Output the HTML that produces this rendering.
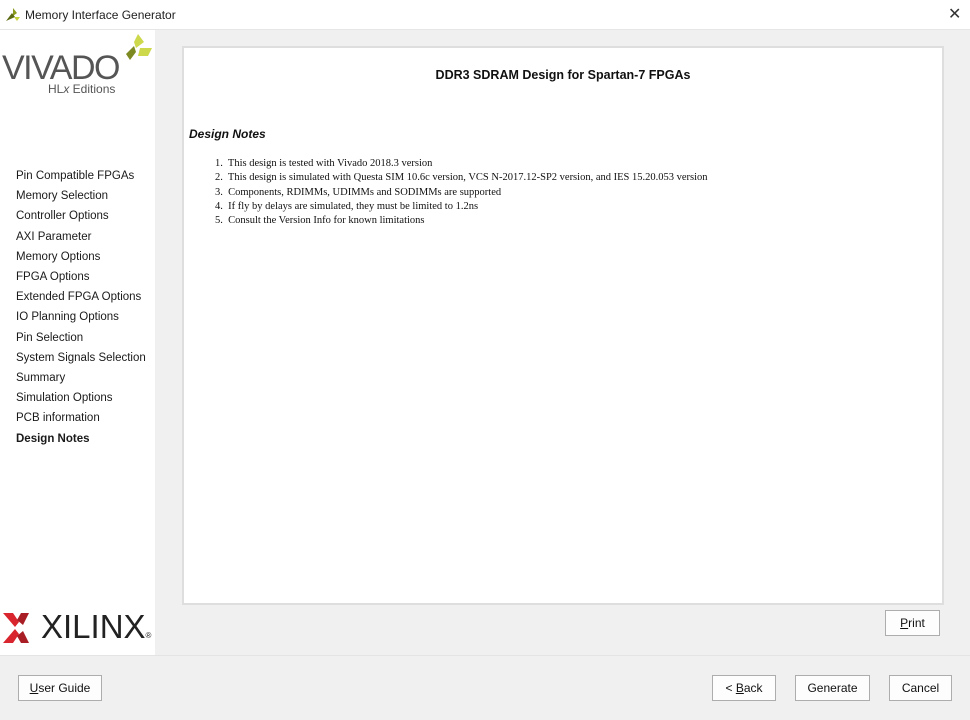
<!DOCTYPE html>
<html><head><style>
body{margin:0;width:970px;height:720px;background:#f0f0f0;font-family:"Liberation Sans",sans-serif;position:relative;overflow:hidden}
.abs{position:absolute}
.title{left:0;top:0;width:970px;height:29px;background:#fff;border-bottom:1px solid #e6e6e6}
.nav{left:16px;font-size:11.5px;color:#1a1a1a;line-height:20.2px;top:166px}
.btn{position:absolute;border:1px solid #adadad;background:#fdfdfd;font-size:12px;text-align:center;line-height:24px;height:24px;color:#111}
.notes{font-family:"Liberation Serif",serif;font-size:10.5px;line-height:14.3px;color:#111}
</style></head><body>
<div class="abs title">
<svg class="abs" style="left:6px;top:8px" width="14" height="13"><polygon points="7,0 11,5 7,8" fill="#8a9a1a"/><polygon points="0,13 6,5 9,9" fill="#5b6a12"/><polygon points="8,9 14,9 11,13" fill="#c6d23c"/></svg>
<div class="abs" style="left:25px;top:8px;font-size:12px;color:#222">Memory Interface Generator</div>
<div class="abs" style="left:948px;top:4px;font-size:16px;color:#333">✕</div>
</div>
<div class="abs" style="left:0;top:30px;width:155px;height:625px;background:#fff"></div>
<div class="abs" style="left:2px;top:49px;font-size:34px;color:#555;letter-spacing:-1.5px">VIVADO</div>
<div class="abs" style="left:48px;top:82px;font-size:12px;color:#555">HL<i>x</i> Editions</div>
<svg class="abs" style="left:122px;top:34px" width="32" height="34"><polygon points="12,12 4,20 8,26 14,18" fill="#7d8a22"/><polygon points="16,0 22,8 14,14 12,8" fill="#cdd84a"/><polygon points="18,14 30,14 26,22 16,22" fill="#cdd84a"/></svg>
<div class="abs nav">Pin Compatible FPGAs<br>Memory Selection<br>Controller Options<br>AXI Parameter<br>Memory Options<br>FPGA Options<br>Extended FPGA Options<br>IO Planning Options<br>Pin Selection<br>System Signals Selection<br>Summary<br>Simulation Options<br>PCB information<br><b>Design Notes</b></div>
<svg class="abs" style="left:3px;top:613px" width="30" height="30"><polygon points="0,0 10,0 16,9 12,14" fill="#d9262e"/><polygon points="0,30 10,30 16,21 12,16" fill="#d9262e"/><polygon points="26,0 18,0 14,7 20,12" fill="#a81e24"/><polygon points="26,30 18,30 14,23 20,18" fill="#a81e24"/></svg>
<div class="abs" style="left:41px;top:608px;font-size:33px;color:#222">XILINX<span style="font-size:8px">®</span></div>
<div class="abs" style="left:182px;top:46px;width:758px;height:555px;border:2px solid #dedede;background:#fff"></div>
<div class="abs" style="left:184px;top:68px;width:758px;text-align:center;font-weight:bold;font-size:12.5px;color:#111">DDR3 SDRAM Design for Spartan-7 FPGAs</div>
<div class="abs" style="left:189px;top:127px;font-weight:bold;font-style:italic;font-size:12px;color:#111">Design Notes</div>
<div class="abs notes" style="left:215px;top:157px">1.&nbsp; This design is tested with Vivado 2018.3 version<br>2.&nbsp; This design is simulated with Questa SIM 10.6c version, VCS N-2017.12-SP2 version, and IES 15.20.053 version<br>3.&nbsp; Components, RDIMMs, UDIMMs and SODIMMs are supported<br>4.&nbsp; If fly by delays are simulated, they must be limited to 1.2ns<br>5.&nbsp; Consult the Version Info for known limitations</div>
<div class="btn" style="left:885px;top:610px;width:53px"><u>P</u>rint</div>
<div class="abs" style="left:0;top:655px;width:970px;height:1px;background:#e4e4e4"></div>
<div class="btn" style="left:18px;top:675px;width:82px"><u>U</u>ser Guide</div>
<div class="btn" style="left:712px;top:675px;width:62px">&lt; <u>B</u>ack</div>
<div class="btn" style="left:795px;top:675px;width:73px">Generate</div>
<div class="btn" style="left:889px;top:675px;width:61px">Cancel</div>
</body></html>
